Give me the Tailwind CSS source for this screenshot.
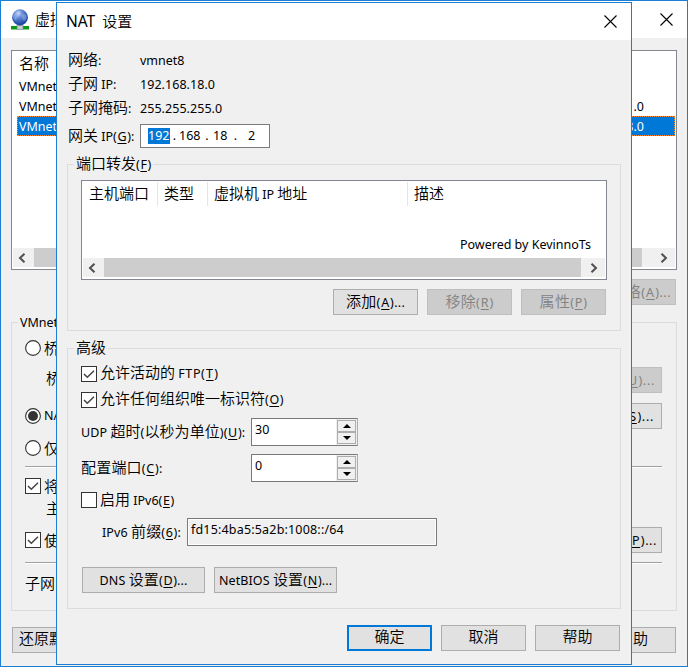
<!DOCTYPE html>
<html lang="zh-CN">
<head>
<meta charset="utf-8">
<title>NAT 设置</title>
<script src="https://cdn.jsdelivr.net/npm/@tailwindcss/browser@4"></script>
</head>
<body class="relative w-[688px] h-[667px] overflow-hidden bg-[#f0f0f0] text-black text-[12.5px] leading-[20px] whitespace-nowrap font-['Noto_Sans','Noto_Sans_CJK_SC',sans-serif] [&_i]:not-italic [&_i]:[font-weight:350] [&_i]:text-[15px] [&_i]:leading-none [&_i]:align-[0.5px] [&_u]:underline-offset-2 [&_u]:mx-[0.6px]">
<svg class="hidden">
  <symbol id="close" viewBox="0 0 13 13"><path d="M.5.5l12 12M12.5.5l-12 12" stroke="#000" stroke-width="1.1" fill="none"/></symbol>
  <symbol id="left" viewBox="0 0 8 10"><path d="M6.500 .7L2 5l4.500 4.300" stroke="#505050" stroke-width="2" fill="none"/></symbol>
  <symbol id="right" viewBox="0 0 8 10"><path d="M1.500 .7L6 5L1.500 9.300" stroke="#505050" stroke-width="2" fill="none"/></symbol>
  <symbol id="check" viewBox="0 0 16 16"><rect x=".5" y=".5" width="15" height="15" fill="#fff" stroke="#333"/><path d="M3 8l3.300 3.300L13 4.700" fill="none" stroke="#444" stroke-width="1.500"/></symbol>
  <symbol id="box" viewBox="0 0 16 16"><rect x=".5" y=".5" width="15" height="15" fill="#fff" stroke="#333"/></symbol>
  <symbol id="radio" viewBox="0 0 16 16"><circle cx="8" cy="8" r="7.400" fill="#fff" stroke="#333" stroke-width="1.100"/></symbol>
  <symbol id="spin" viewBox="0 0 8 4"><path d="M4 0L8 4H0z"/></symbol>
</svg>

<!-- Virtual network editor window -->
<main class="w-[688px] h-[667px] border border-[#1a7fd4] flex flex-col">
  <header class="h-[37px] shrink-0 bg-white flex items-center pl-[10px] pr-[14px]">
    <svg class="w-[18px] h-[21px] mr-[6px]" viewBox="0 0 18 21">
      <defs><radialGradient id="g" cx=".4" cy=".25" r=".75"><stop offset="0" stop-color="#cfe0ff"/><stop offset=".3" stop-color="#6f93dc"/><stop offset="1" stop-color="#123f9c"/></radialGradient></defs>
      <rect x="7" y="15" width="4" height="4" fill="#b9c2c8"/>
      <rect x="0" y="17" width="6" height="3.500" fill="#0a9a10"/><rect x="12" y="17" width="6" height="3.500" fill="#0a9a10"/>
      <rect x="6" y="16.500" width="6" height="4" fill="#c3cdd2" stroke="#6d7f88" stroke-width=".6"/>
      <circle cx="9" cy="8.300" r="8" fill="url(#g)"/>
      <path d="M3 5q3-3 5-1t-1 4-1 4q-3-1-4-4zM11 5l4 1q2 4-2 6-3-3-2-7z" fill="#a9c4f5" opacity=".4"/>
    </svg>
    <span class="text-[15px] [font-weight:350] -mt-px">虚拟</span>
    <svg class="w-[13px] h-[13px] ml-auto"><use href="#close"/></svg>
  </header>

  <div class="mt-[12px] mx-[10px] h-[220px] shrink-0 border border-[#828790] bg-white p-px flex flex-col">
    <div class="h-[25px] pl-[6px] leading-[25px]"><i>名称</i></div>
    <div class="h-[19px] pl-[6px]">VMnet</div>
    <div class="h-[20px] pl-[6px] pr-[31px] flex justify-between leading-[22px]"><span>VMnet</span><span>.0</span></div>
    <div class="h-[20px] ml-[4px] pl-[1px] pr-[30px] border border-dotted border-[#ff8728] bg-[#0078d7] text-white flex justify-between leading-[20px]"><span>VMnet</span><span>8.0</span></div>
    <div class="mt-auto h-[19px] mb-px bg-[#f0f0f0] flex items-center">
      <svg class="w-[8px] h-[10px] ml-[5px] mr-[8px]"><use href="#left"/></svg>
      <div class="h-full w-[608px] bg-[#cdcdcd]"></div>
      <svg class="w-[8px] h-[10px] ml-auto mr-[7px]"><use href="#right"/></svg>
    </div>
  </div>

  <div class="mt-[9px] mr-[11px] h-[26px] shrink-0 flex justify-end">
    <div class="w-[120px] border border-[#bfbfbf] bg-[#ccc] text-[#838383] text-right pr-[4px] leading-[25px] tracking-[0.5px]"><i>络</i>(<u>A</u>)...</div>
  </div>

  <section class="mt-[17px] mx-[10px] h-[289px] shrink-0 border border-[#dcdcdc] flex flex-col pl-[13px] pr-[14px]">
    <div class="-mt-[10px] -ml-[7px] h-[19px] w-max bg-[#f0f0f0] px-[2px]">VMnet</div>
    <div class="mt-[6px] h-[20px] flex items-center gap-[3px]"><svg class="w-4 h-4"><use href="#radio"/></svg><i>桥</i></div>
    <div class="mt-[9px] h-[26px] flex justify-between pl-[21px]">
      <i class="pt-[4px]">桥</i>
      <div class="w-[120px] border border-[#bfbfbf] bg-[#ccc] text-[#838383] text-right pr-[6px] leading-[25px] tracking-[0.7px]"><u>U</u>)...</div>
    </div>
    <div class="mt-[10px] h-[26px] flex items-center gap-[3px]">
      <svg class="w-4 h-4"><use href="#radio"/><circle cx="8" cy="8" r="5" fill="#333"/></svg><span>NA</span>
      <div class="ml-auto w-[120px] h-[26px] border border-[#adadad] bg-[#e1e1e1] text-right pr-[7px] leading-[25px] tracking-[0.7px]"><u>S</u>)...</div>
    </div>
    <div class="mt-[9px] h-[20px] flex items-center gap-[3px]"><svg class="w-4 h-4"><use href="#radio"/></svg><i>仅</i></div>
    <div class="mt-[8px] h-[2px] border-t border-[#a0a0a0] bg-white"></div>
    <div class="mt-[8px] h-[20px] flex items-center gap-[3px]"><svg class="w-4 h-4"><use href="#check"/></svg><i>将</i></div>
    <div class="mt-[4px] h-[20px] pl-[21px] leading-[20px]"><i>主</i></div>
    <div class="mt-[7px] h-[26px] flex items-center gap-[3px]">
      <svg class="w-4 h-4"><use href="#check"/></svg><i>使</i>
      <div class="ml-auto w-[120px] h-[26px] border border-[#adadad] bg-[#e1e1e1] text-right pr-[4px] leading-[25px] tracking-[0.6px]"><u>P</u>)...</div>
    </div>
    <div class="mt-[9px] h-[2px] border-t border-[#a0a0a0] bg-white"></div>
    <div class="mt-[10px] leading-[21px]"><i>子网</i></div>
  </section>

  <footer class="mt-[16px] mx-[11px] h-[26px] shrink-0 flex justify-between">
    <div class="w-[110px] border border-[#adadad] bg-[#e1e1e1] pl-[6px] leading-[24px]"><i>还原默</i></div>
    <div class="w-[85px] border border-[#adadad] bg-[#e1e1e1] text-right pr-[27px] leading-[24px]"><i>助</i></div>
  </footer>
</main>

<!-- NAT settings dialog -->
<div class="absolute left-[56px] top-[2px] w-[576px] h-[663px] border border-[#1a7fd4] bg-[#f0f0f0] flex flex-col">
  <header class="h-[37px] shrink-0 bg-white flex items-center pl-[9px] pr-[14px] text-[15px]">
    <span class="-mt-px"><span class="text-[15.5px] mr-[3px]">NAT</span> <span class="[font-weight:350]">设置</span></span>
    <svg class="w-[13px] h-[13px] ml-auto"><use href="#close"/></svg>
  </header>

  <div class="mt-[9px] ml-[11px] grid grid-cols-[72px_1fr] auto-rows-[24px] leading-[24px] shrink-0 h-[72px]">
    <div><i>网络</i>:</div><div>vmnet8</div>
    <div><i>子网</i> IP:</div><div class="tracking-[0.05px]">192.168.18.0</div>
    <div><i>子网掩码</i>:</div><div class="tracking-[0.05px]">255.255.255.0</div>
  </div>
  <div class="mt-[3px] ml-[11px] h-[24px] shrink-0 flex">
    <div class="w-[72px] leading-[25px]"><i>网关</i> IP(<u>G</u>):</div>
    <div class="w-[130px] border border-[#7a7a7a] bg-white flex items-center pl-[7px] leading-[16px]">
      <span class="bg-[#0078d7] text-white w-[22px]">192</span>
      <span class="w-[9px] text-center">.</span><span class="w-[22px]">168</span>
      <span class="w-[12px] text-center">.</span><span class="w-[14px]">18</span>
      <span class="w-[17px] text-center">.</span><span class="pl-[4px]">2</span>
    </div>
  </div>

  <section class="mt-[16px] ml-[10px] w-[554px] h-[167px] shrink-0 border border-[#dcdcdc] pl-[13px] flex flex-col">
    <div class="-mt-[11px] -ml-[7px] h-[20px] w-max bg-[#f0f0f0] px-[2px] leading-[21px]"><i>端口转发</i>(<u>F</u>)</div>
    <div class="mt-[6px] w-[526px] h-[100px] border border-[#828790] bg-white p-px flex flex-col">
      <div class="h-[24px] flex leading-[25px]">
        <div class="w-[75px] border-r border-[#e5e5e5] pl-[6px]"><i>主机端口</i></div>
        <div class="w-[50px] border-r border-[#e5e5e5] pl-[6px]"><i>类型</i></div>
        <div class="w-[200px] border-r border-[#e5e5e5] pl-[6px]"><i>虚拟机</i> IP <i>地址</i></div>
        <div class="pl-[6px]"><i>描述</i></div>
      </div>
      <div class="mt-[29px] pr-[14px] h-[20px] text-right"><span>Powered by KevinnoTs</span></div>
      <div class="mt-auto h-[19px] mb-px bg-[#f0f0f0] flex items-center">
        <svg class="w-[8px] h-[10px] ml-[5px] mr-[8px]"><use href="#left"/></svg>
        <div class="h-full w-[477px] bg-[#cdcdcd]"></div>
        <svg class="w-[8px] h-[10px] ml-auto mr-[7px]"><use href="#right"/></svg>
      </div>
    </div>
    <div class="mt-[9px] mr-[14px] h-[26px] flex justify-end gap-[9px] text-center leading-[25px] tracking-[0.3px]">
      <div class="w-[85px] border border-[#adadad] bg-[#e1e1e1]"><i>添加</i>(<u>A</u>)...</div>
      <div class="w-[85px] border border-[#bfbfbf] bg-[#ccc] text-[#838383]"><i>移除</i>(<u>R</u>)</div>
      <div class="w-[85px] border border-[#bfbfbf] bg-[#ccc] text-[#838383]"><i>属性</i>(<u>P</u>)</div>
    </div>
  </section>

  <section class="mt-[17px] ml-[10px] w-[554px] h-[261px] shrink-0 border border-[#dcdcdc] pl-[13px] flex flex-col">
    <div class="-mt-[11px] -ml-[7px] h-[20px] w-max bg-[#f0f0f0] px-[2px] leading-[21px]"><i>高级</i></div>
    <div class="mt-[6px] h-[20px] flex items-center gap-[3px] leading-[22px]"><svg class="w-4 h-4"><use href="#check"/></svg><span><i>允许活动的</i> <span class="tracking-[0.6px]">FTP(<u>T</u>)</span></span></div>
    <div class="mt-[6px] h-[20px] flex items-center gap-[3px] leading-[22px]"><svg class="w-4 h-4"><use href="#check"/></svg><span><i>允许任何组织唯一标识符</i>(<u>O</u>)</span></div>
    <div class="mt-[8px] h-[28px] flex">
      <div class="w-[170px] leading-[30px] tracking-[0.08px]">UDP <i>超时</i>(<i>以秒为单位</i>)(<u>U</u>):</div>
      <div class="w-[107px] border border-[#7a7a7a] border-r-[#abadb3] bg-white flex justify-between pl-[3px] leading-[22px]"><span>30</span>
        <div class="w-[21px] bg-[#f0f0f0] p-px flex flex-col">
          <div class="flex-1 border border-[#adadad] flex items-center justify-center"><svg class="w-[8px] h-[4px]"><use href="#spin"/></svg></div>
          <div class="flex-1 border border-[#adadad] flex items-center justify-center"><svg class="w-[8px] h-[4px] rotate-180"><use href="#spin"/></svg></div>
        </div>
      </div>
    </div>
    <div class="mt-[8px] h-[28px] flex">
      <div class="w-[170px] leading-[29px] tracking-[0.2px]"><i>配置端口</i>(<u>C</u>):</div>
      <div class="w-[107px] border border-[#7a7a7a] border-r-[#abadb3] bg-white flex justify-between pl-[3px] leading-[22px]"><span>0</span>
        <div class="w-[21px] bg-[#f0f0f0] p-px flex flex-col">
          <div class="flex-1 border border-[#adadad] flex items-center justify-center"><svg class="w-[8px] h-[4px]"><use href="#spin"/></svg></div>
          <div class="flex-1 border border-[#adadad] flex items-center justify-center"><svg class="w-[8px] h-[4px] rotate-180"><use href="#spin"/></svg></div>
        </div>
      </div>
    </div>
    <div class="mt-[8px] h-[20px] flex items-center gap-[3px] leading-[21px]"><svg class="w-4 h-4"><use href="#box"/></svg><span><i>启用</i> IPv6(<u>E</u>)</span></div>
    <div class="mt-[8px] h-[28px] flex">
      <div class="w-[106px] pl-[21px] leading-[29px] tracking-[0.1px]">IPv6 <i>前缀</i>(<u>6</u>):</div>
      <div class="w-[250px] border border-[#7a7a7a] pl-[3px] leading-[22px] tracking-[0.18px] shadow-[inset_0_0_0_1px_#fff]">fd15:4ba5:5a2b:1008::/64</div>
    </div>
    <div class="mt-[21px] ml-px h-[26px] flex gap-[9px] text-center leading-[25px] tracking-[0.1px]">
      <div class="w-[123px] border border-[#adadad] bg-[#e1e1e1]">DNS <i>设置</i>(<u>D</u>)...</div>
      <div class="w-[123px] border border-[#adadad] bg-[#e1e1e1]">NetBIOS <i>设置</i>(<u>N</u>)...</div>
    </div>
  </section>

  <footer class="mt-[16px] mr-[11px] h-[26px] shrink-0 flex justify-end gap-[9px] text-center">
    <div class="w-[85px] border-2 border-[#0078d7] bg-[#e1e1e1] leading-[22px]"><i>确定</i></div>
    <div class="w-[85px] border border-[#adadad] bg-[#e1e1e1] leading-[24px]"><i>取消</i></div>
    <div class="w-[85px] border border-[#adadad] bg-[#e1e1e1] leading-[24px]"><i>帮助</i></div>
  </footer>
</div>
</body>
</html>
